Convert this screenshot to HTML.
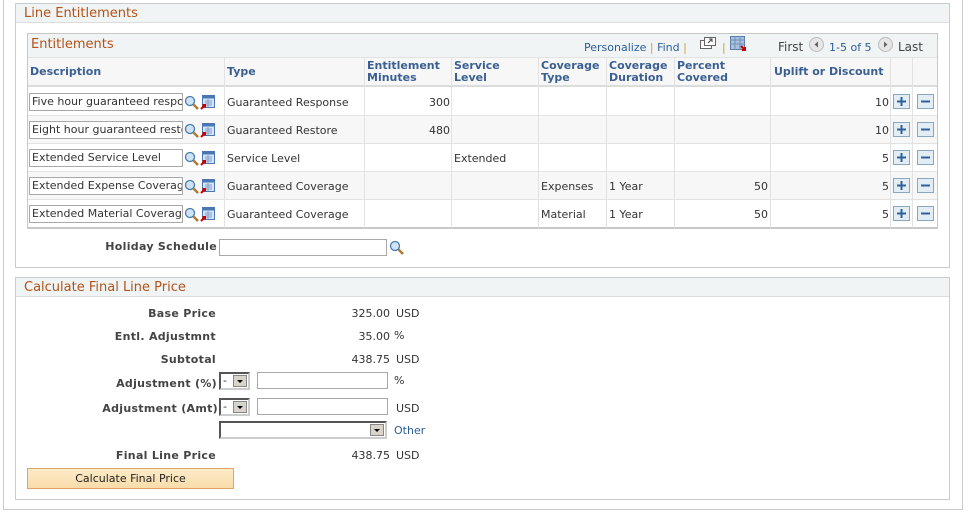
<!DOCTYPE html>
<html><head><meta charset="utf-8">
<style>
*{box-sizing:border-box;margin:0;padding:0}
body{width:969px;height:514px;background:#fff;font-family:"DejaVu Sans","Liberation Sans",sans-serif;font-size:11px;color:#333;position:relative;overflow:hidden}
.a{position:absolute;white-space:nowrap}
.box{position:absolute;border:1px solid #cbcbcb}
.hdr{position:absolute;background:#f1f4f4;border-bottom:1px solid #dcdcdc;color:#b0531a;font-size:13px;padding-left:8px;line-height:19px}
.th{color:#3a5f93;font-weight:bold;font-size:11px;line-height:12px}
.lbl{font-weight:bold;color:#444;text-align:right;letter-spacing:0.3px}
.inp{position:absolute;border:1px solid #a8a8a8;background:#fff;overflow:hidden;white-space:nowrap;font-size:11px;padding-left:2px;line-height:16px;color:#333}
.vl{position:absolute;background:#e2e2e2;width:1px}
.hl{position:absolute;background:#e2e2e2;height:1px}
.sel{position:absolute;border:2px solid #555;border-right-color:#ccc;border-bottom-color:#ccc;background:#fff}
.arr{position:absolute;right:1px;top:1px;width:14px;height:12px;background:#d8d4cc;border:1px solid #888}
.arr:after{content:"";position:absolute;left:3px;top:4px;border-left:3px solid transparent;border-right:3px solid transparent;border-top:3px solid #000}
.link{color:#2b5d9b}
</style></head><body>
<div class="box" style="left:3px;top:-2px;width:960px;height:512px"></div>

<div class="box" style="left:15px;top:3px;width:935px;height:265px"></div>
<div class="hdr" style="left:16px;top:4px;width:933px;height:19px">Line Entitlements</div>

<div class="box" style="left:27px;top:33px;width:911px;height:196px;border-color:#c8c8c8;border-bottom:2px solid #c8c8c8"></div>
<div class="a" style="left:28px;top:34px;width:909px;height:23px;background:#f1f4f4"></div>
<div class="a" style="left:31px;top:37px;color:#b0531a;font-size:13px">Entitlements</div>
<div class="a link" style="left:584px;top:41px">Personalize <span style="color:#c9a040">|</span> Find <span style="color:#c9a040">|</span></div>
<svg class="a" style="left:700px;top:37px" width="17" height="13"><rect x="0.5" y="3.5" width="11" height="8" fill="#fff" stroke="#666"/><rect x="4.5" y="0.5" width="11" height="8" fill="#fff" stroke="#666"/><path d="M8 6 L12 2 M9 2h3v3" stroke="#444" fill="none"/></svg>
<div class="a" style="left:722px;top:41px;color:#c9a040">|</div>
<svg class="a" style="left:730px;top:36px" width="17" height="16"><rect x="0.5" y="0.5" width="14" height="13" fill="#aac0dc" stroke="#5a7ca6"/><path d="M0 4h15M0 8h15M5 0v14M10 0v14" stroke="#6f8fb8"/><path d="M11 10l4 4M15 11v3h-3" stroke="#c00" stroke-width="2" fill="none"/></svg>
<div class="a" style="left:778px;top:40px;font-size:12px;color:#444">First</div>
<svg class="a" style="left:809px;top:37px" width="15" height="15"><circle cx="7.5" cy="7.5" r="7" fill="#e6e6e6" stroke="#bbb"/><path d="M9 4.5 L5.5 7.5 L9 10.5Z" fill="#666"/></svg>
<div class="a" style="left:829px;top:41px;color:#2b5d9b">1-5 of 5</div>
<svg class="a" style="left:878px;top:37px" width="15" height="15"><circle cx="7.5" cy="7.5" r="7" fill="#e6e6e6" stroke="#bbb"/><path d="M6 4.5 L9.5 7.5 L6 10.5Z" fill="#666"/></svg>
<div class="a" style="left:898px;top:40px;font-size:12px;color:#444">Last</div>

<div class="a" style="left:28px;top:57px;width:909px;height:30px;background:#f7f7f7;border-top:1px solid #e2e2e2;border-bottom:2px solid #dcdcdc"></div>
<div class="a th" style="left:30px;top:66px">Description</div>
<div class="a th" style="left:227px;top:66px">Type</div>
<div class="a th" style="left:367px;top:60px">Entitlement<br>Minutes</div>
<div class="a th" style="left:454px;top:60px">Service<br>Level</div>
<div class="a th" style="left:541px;top:60px">Coverage<br>Type</div>
<div class="a th" style="left:609px;top:60px">Coverage<br>Duration</div>
<div class="a th" style="left:677px;top:60px">Percent<br>Covered</div>
<div class="a th" style="left:774px;top:66px">Uplift or Discount</div>

<div class="a" style="left:28px;top:115px;width:909px;height:28px;background:#f7f7f7"></div>
<div class="a" style="left:28px;top:171px;width:909px;height:28px;background:#f7f7f7"></div>
<div class="hl" style="left:28px;top:115px;width:909px"></div>
<div class="hl" style="left:28px;top:143px;width:909px"></div>
<div class="hl" style="left:28px;top:171px;width:909px"></div>
<div class="hl" style="left:28px;top:199px;width:909px"></div>
<div class="vl" style="left:224px;top:57px;height:171px"></div>
<div class="vl" style="left:364px;top:57px;height:171px"></div>
<div class="vl" style="left:451px;top:57px;height:171px"></div>
<div class="vl" style="left:538px;top:57px;height:171px"></div>
<div class="vl" style="left:606px;top:57px;height:171px"></div>
<div class="vl" style="left:674px;top:57px;height:171px"></div>
<div class="vl" style="left:770px;top:57px;height:171px"></div>
<div class="vl" style="left:890px;top:57px;height:171px"></div>
<div class="vl" style="left:912px;top:57px;height:171px"></div>

<div class="inp" style="left:29px;top:93px;width:154px;height:18px">Five hour guaranteed response</div>
<div class="inp" style="left:29px;top:121px;width:154px;height:18px">Eight hour guaranteed restore</div>
<div class="inp" style="left:29px;top:149px;width:154px;height:18px">Extended Service Level</div>
<div class="inp" style="left:29px;top:177px;width:154px;height:18px">Extended Expense Coverage</div>
<div class="inp" style="left:29px;top:205px;width:154px;height:18px">Extended Material Coverage</div>

<svg width="0" height="0" style="position:absolute"><defs>
<g id="mag"><circle cx="6" cy="6" r="4.5" fill="#cfe3f5" stroke="#4a7ab0" stroke-width="1.3"/><path d="M9.5 9.5 L14 14" stroke="#b07a30" stroke-width="2.5"/></g>
<g id="cal"><rect x="2.5" y="0.5" width="12" height="12" fill="#d6e4f4" stroke="#4b77b5"/><rect x="2.5" y="0.5" width="12" height="3" fill="#4b77b5"/><path d="M5 6h7M5 8h7M5 10h7M8 4v8" stroke="#7fa1cf"/><path d="M1 14 L5 10 M2.5 10h2.5v2.5" stroke="#c00" stroke-width="2" fill="none"/></g>
<g id="plus"><rect x="0.5" y="0.5" width="16" height="14" fill="#e4edf3" stroke="#8aa6bd"/><path d="M8.5 3v9M4 7.5h9" stroke="#2d62a0" stroke-width="2"/></g>
<g id="minus"><rect x="0.5" y="0.5" width="16" height="14" fill="#e4edf3" stroke="#8aa6bd"/><path d="M4 7.5h9" stroke="#2d62a0" stroke-width="2"/></g>
</defs></svg>
<svg class="a" style="left:184px;top:95px" width="32" height="16"><use href="#mag"/><use href="#cal" x="16"/></svg>
<svg class="a" style="left:184px;top:123px" width="32" height="16"><use href="#mag"/><use href="#cal" x="16"/></svg>
<svg class="a" style="left:184px;top:151px" width="32" height="16"><use href="#mag"/><use href="#cal" x="16"/></svg>
<svg class="a" style="left:184px;top:179px" width="32" height="16"><use href="#mag"/><use href="#cal" x="16"/></svg>
<svg class="a" style="left:184px;top:207px" width="32" height="16"><use href="#mag"/><use href="#cal" x="16"/></svg>

<div class="a" style="left:227px;top:96px">Guaranteed Response</div>
<div class="a" style="left:227px;top:124px">Guaranteed Restore</div>
<div class="a" style="left:227px;top:152px">Service Level</div>
<div class="a" style="left:227px;top:180px">Guaranteed Coverage</div>
<div class="a" style="left:227px;top:208px">Guaranteed Coverage</div>
<div class="a" style="left:365px;top:96px;width:85px;text-align:right">300</div>
<div class="a" style="left:365px;top:124px;width:85px;text-align:right">480</div>
<div class="a" style="left:454px;top:152px">Extended</div>
<div class="a" style="left:541px;top:180px">Expenses</div>
<div class="a" style="left:541px;top:208px">Material</div>
<div class="a" style="left:609px;top:180px">1 Year</div>
<div class="a" style="left:609px;top:208px">1 Year</div>
<div class="a" style="left:675px;top:180px;width:93px;text-align:right">50</div>
<div class="a" style="left:675px;top:208px;width:93px;text-align:right">50</div>
<div class="a" style="left:771px;top:96px;width:118px;text-align:right">10</div>
<div class="a" style="left:771px;top:124px;width:118px;text-align:right">10</div>
<div class="a" style="left:771px;top:152px;width:118px;text-align:right">5</div>
<div class="a" style="left:771px;top:180px;width:118px;text-align:right">5</div>
<div class="a" style="left:771px;top:208px;width:118px;text-align:right">5</div>

<svg class="a" style="left:893px;top:94px" width="18" height="16"><use href="#plus"/></svg>
<svg class="a" style="left:917px;top:94px" width="18" height="16"><use href="#minus"/></svg>
<svg class="a" style="left:893px;top:122px" width="18" height="16"><use href="#plus"/></svg>
<svg class="a" style="left:917px;top:122px" width="18" height="16"><use href="#minus"/></svg>
<svg class="a" style="left:893px;top:150px" width="18" height="16"><use href="#plus"/></svg>
<svg class="a" style="left:917px;top:150px" width="18" height="16"><use href="#minus"/></svg>
<svg class="a" style="left:893px;top:178px" width="18" height="16"><use href="#plus"/></svg>
<svg class="a" style="left:917px;top:178px" width="18" height="16"><use href="#minus"/></svg>
<svg class="a" style="left:893px;top:206px" width="18" height="16"><use href="#plus"/></svg>
<svg class="a" style="left:917px;top:206px" width="18" height="16"><use href="#minus"/></svg>

<div class="a lbl" style="left:20px;top:240px;width:197px">Holiday Schedule</div>
<div class="inp" style="left:219px;top:239px;width:168px;height:17px"></div>
<svg class="a" style="left:389px;top:240px" width="16" height="16"><use href="#mag"/></svg>

<div class="box" style="left:15px;top:277px;width:935px;height:223px"></div>
<div class="hdr" style="left:16px;top:278px;width:933px;height:19px">Calculate Final Line Price</div>

<div class="a lbl" style="left:20px;top:307px;width:196px">Base Price</div>
<div class="a" style="left:300px;top:307px;width:90px;text-align:right">325.00</div><div class="a" style="left:396px;top:307px">USD</div>
<div class="a lbl" style="left:20px;top:330px;width:196px">Entl. Adjustmnt</div>
<div class="a" style="left:300px;top:330px;width:90px;text-align:right">35.00</div><div class="a" style="left:394px;top:329px">%</div>
<div class="a lbl" style="left:20px;top:353px;width:196px">Subtotal</div>
<div class="a" style="left:300px;top:353px;width:90px;text-align:right">438.75</div><div class="a" style="left:396px;top:353px">USD</div>

<div class="a lbl" style="left:20px;top:377px;width:197px">Adjustment (%)</div>
<div class="sel" style="left:219px;top:372px;width:31px;height:18px"><span class="a" style="left:2px;top:0px">-</span><div class="arr"></div></div>
<div class="inp" style="left:257px;top:372px;width:131px;height:17px"></div>
<div class="a" style="left:394px;top:374px">%</div>

<div class="a lbl" style="left:20px;top:402px;width:198px">Adjustment (Amt)</div>
<div class="sel" style="left:219px;top:398px;width:31px;height:18px"><span class="a" style="left:2px;top:0px">-</span><div class="arr"></div></div>
<div class="inp" style="left:257px;top:398px;width:131px;height:17px"></div>
<div class="a" style="left:396px;top:402px">USD</div>

<div class="sel" style="left:219px;top:421px;width:168px;height:18px"><div class="arr"></div></div>
<div class="a link" style="left:394px;top:424px">Other</div>

<div class="a lbl" style="left:20px;top:449px;width:196px">Final Line Price</div>
<div class="a" style="left:300px;top:449px;width:90px;text-align:right">438.75</div><div class="a" style="left:396px;top:449px">USD</div>

<div class="a" style="left:27px;top:468px;width:207px;height:21px;background:linear-gradient(#fdebc8,#f9dcaa);border:1px solid #e0a565;text-align:center;line-height:19px;color:#222">Calculate Final Price</div>
</body></html>
